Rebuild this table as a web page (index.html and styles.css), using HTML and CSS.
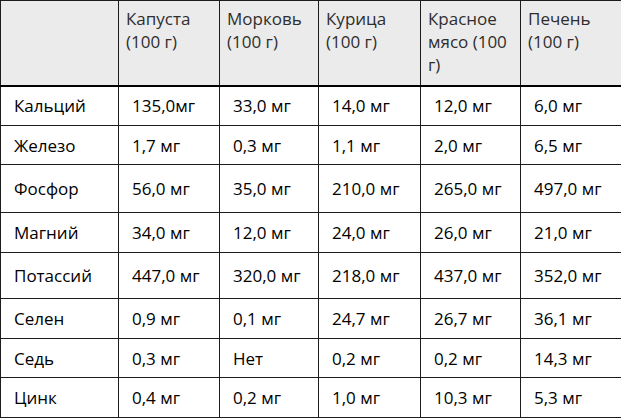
FILE: index.html
```html
<!DOCTYPE html>
<html lang="ru">
<head>
<meta charset="utf-8">
<title>Минералы</title>
<link rel="stylesheet" href="styles.css">
</head>
<body>
<table class="tbl">
  <colgroup>
    <col class="c0"><col class="c1"><col class="c2"><col class="c3"><col class="c4"><col class="c5">
  </colgroup>
  <thead>
    <tr class="head">
      <th></th>
      <th>Капуста<br>(100 г)</th>
      <th>Морковь<br>(100 г)</th>
      <th>Курица<br>(100 г)</th>
      <th>Красное<br>мясо (100<br>г)</th>
      <th>Печень<br>(100 г)</th>
    </tr>
  </thead>
  <tbody>
    <tr class="r40"><td>Кальций</td><td>135,0мг</td><td>33,0 мг</td><td>14,0 мг</td><td>12,0 мг</td><td>6,0 мг</td></tr>
    <tr class="r39"><td>Железо</td><td>1,7 мг</td><td>0,3 мг</td><td>1,1 мг</td><td>2,0 мг</td><td>6,5 мг</td></tr>
    <tr class="r48"><td>Фосфор</td><td>56,0 мг</td><td>35,0 мг</td><td>210,0 мг</td><td>265,0 мг</td><td>497,0 мг</td></tr>
    <tr class="r40"><td>Магний</td><td>34,0 мг</td><td>12,0 мг</td><td>24,0 мг</td><td>26,0 мг</td><td>21,0 мг</td></tr>
    <tr class="r46"><td>Потассий</td><td>447,0 мг</td><td>320,0 мг</td><td>218,0 мг</td><td>437,0 мг</td><td>352,0 мг</td></tr>
    <tr class="r40"><td>Селен</td><td>0,9 мг</td><td>0,1 мг</td><td>24,7 мг</td><td>26,7 мг</td><td>36,1 мг</td></tr>
    <tr class="r39"><td>Седь</td><td>0,3 мг</td><td>Нет</td><td>0,2 мг</td><td>0,2 мг</td><td>14,3 мг</td></tr>
    <tr class="r40"><td>Цинк</td><td>0,4 мг</td><td>0,2 мг</td><td>1,0 мг</td><td>10,3 мг</td><td>5,3 мг</td></tr>
  </tbody>
</table>
</body>
</html>
```

FILE: styles.css
```css
html, body {
  margin: 0;
  padding: 0;
  background: #ffffff;
}

.tbl {
  border-collapse: collapse;
  table-layout: fixed;
  width: 621px;
  font-family: "Open Sans", "Noto Sans", sans-serif;
  font-size: 17px;
  color: #000000;
}

.c0 { width: 118px; }
.c1 { width: 101px; }
.c2 { width: 99px; }
.c3 { width: 102px; }
.c4 { width: 100px; }
.c5 { width: 101px; }

.tbl th,
.tbl td {
  border: 1px solid #1c1c1c;
  padding: 0 3px 0 13px;
  text-align: left;
  vertical-align: middle;
  white-space: nowrap;
}

.head {
  height: 85px;
  background: #ebebeb;
}

.head th {
  font-weight: normal;
  color: #2e2e2e;
  vertical-align: top;
  padding: 6px 3px 0 7px;
  line-height: 23px;
  border-bottom: 2px solid #000000;
}

.r39 { height: 39px; }
.r40 { height: 40px; }
.r46 { height: 46px; }
.r48 { height: 48px; }
```
